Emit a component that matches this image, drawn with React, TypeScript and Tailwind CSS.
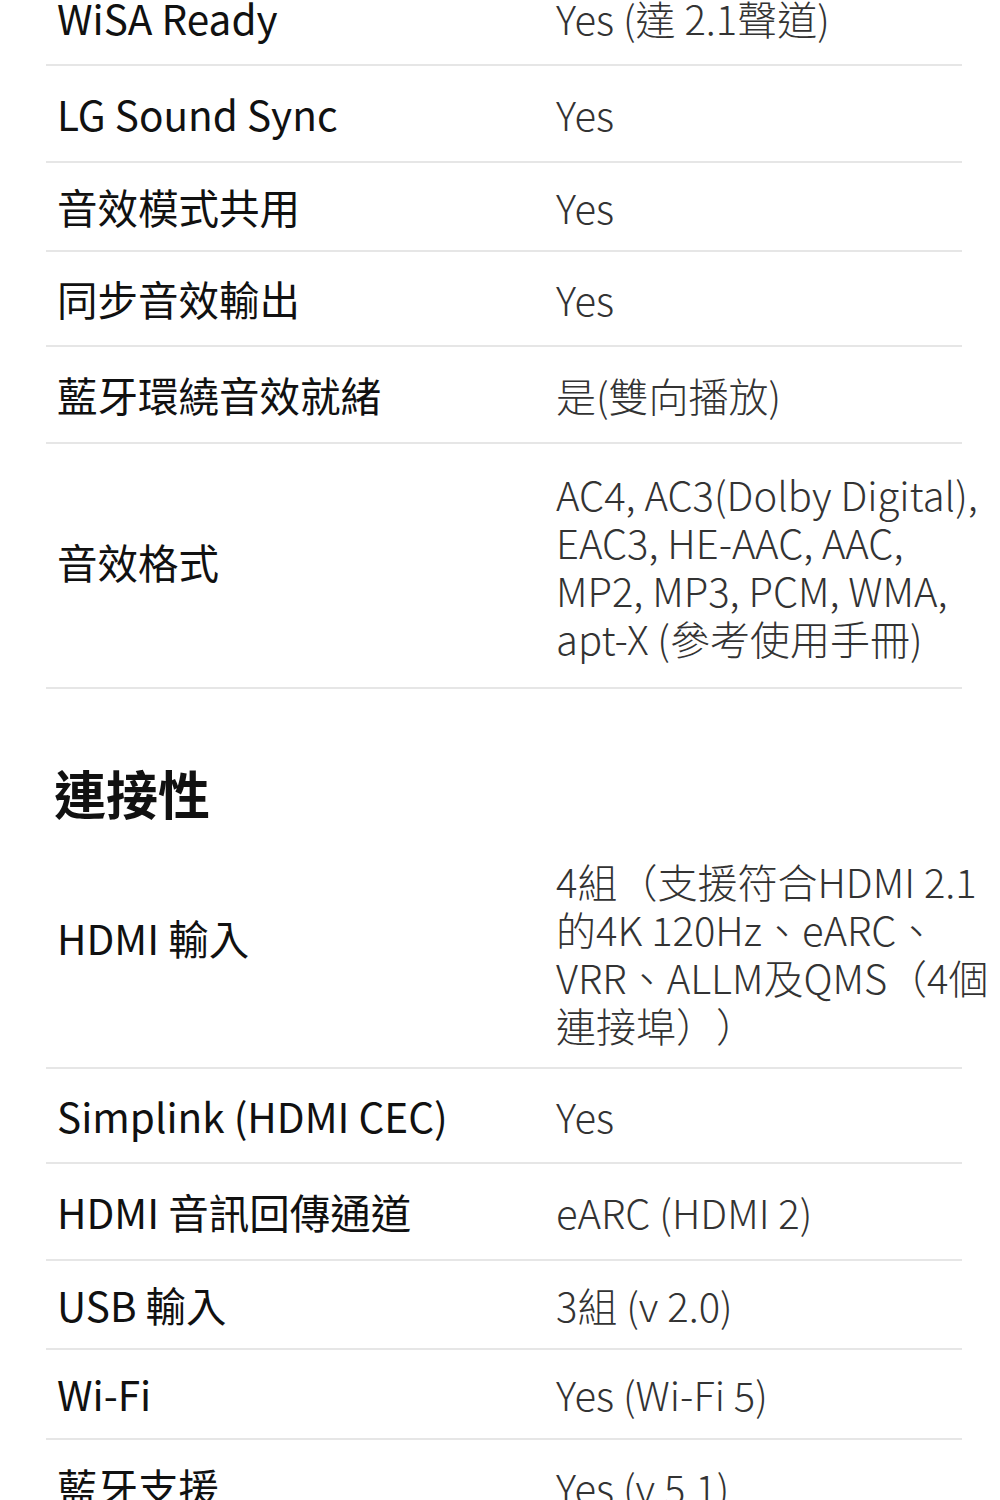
import React from 'react';

// Spec table rows: label on the left, value on the right
type Row = {
    label: string;
    value: React.ReactNode;
    h: string;
    labelCls?: string;
};

const audioRows: Row[] = [
    { label: 'WiSA Ready', value: 'Yes (達 2.1聲道)', h: 'h-[95px]' },
    { label: 'LG Sound Sync', value: 'Yes', h: 'h-[97px]' },
    { label: '音效模式共用', value: 'Yes', h: 'h-[89px]' },
    { label: '同步音效輸出', value: 'Yes', h: 'h-[95px]' },
    { label: '藍牙環繞音效就緒', value: '是(雙向播放)', h: 'h-[97px]' },
    {
        label: '音效格式',
        value: (
            <>
                AC4, AC3(Dolby Digital),
                <br />
                EAC3, HE-AAC, AAC,
                <br />
                MP2, MP3, PCM, WMA,
                <br />
                apt-X (參考使用手冊)
            </>
        ),
        h: 'h-[245px]',
        labelCls: 'mb-[8px]',
    },
];

const connectRows: Row[] = [
    {
        label: 'HDMI 輸入',
        value: (
            <>
                4組（支援符合HDMI 2.1
                <br />
                的4K 120Hz、eARC、
                <br />
                VRR、ALLM及QMS（4個
                <br />
                連接埠））
            </>
        ),
        h: 'h-[230px]',
        labelCls: 'mb-[30px]',
    },
    { label: 'Simplink (HDMI CEC)', value: 'Yes', h: 'h-[95px]' },
    { label: 'HDMI 音訊回傳通道', value: 'eARC (HDMI 2)', h: 'h-[97px]' },
    { label: 'USB 輸入', value: '3組 (v 2.0)', h: 'h-[89px]' },
    { label: 'Wi-Fi', value: 'Yes (Wi-Fi 5)', h: 'h-[90px]' },
    { label: '藍牙支援', value: 'Yes (v 5.1)', h: 'h-[95px]' },
];

const SpecRow = ({ row }: { row: Row }) => (
    <div className={`flex items-center border-b-2 border-[#e6e6e6] ${row.h}`}>
        <div className={`w-[510px] shrink-0 pl-[11px] text-[40.5px] leading-[48px] text-[#111] ${row.labelCls ?? ''}`}>
            {row.label}
        </div>
        <div className="w-[444px] shrink-0 whitespace-nowrap text-[40px] leading-[48px] font-light text-[#333] [text-spacing-trim:space-all]">
            {row.value}
        </div>
    </div>
);

const App = () => {
    return (
        <div
            className="min-h-screen w-[1000px] overflow-hidden bg-white"
            style={{ fontFamily: '"Noto Sans CJK TC", "Noto Sans", sans-serif' }}
        >
            <div className="-mt-[29px] ml-[46px] w-[916px]">
                {/* --- Audio --- */}
                {audioRows.map((row) => (
                    <SpecRow key={row.label} row={row} />
                ))}

                {/* --- Connectivity --- */}
                <h2 className="pt-[78px] pl-[8px] pb-[20px] text-[52px] leading-[52px] font-bold text-[#111]">
                    連接性
                </h2>
                {connectRows.map((row) => (
                    <SpecRow key={row.label} row={row} />
                ))}
            </div>
        </div>
    );
};

export default App;
